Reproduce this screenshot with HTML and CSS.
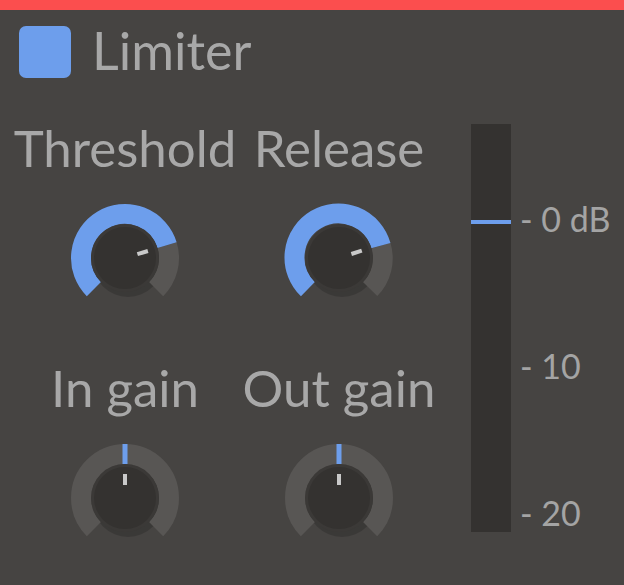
FILE: index.html
```html
<!DOCTYPE html>
<html lang="en">
<head>
  <meta charset="UTF-8">
  <meta name="viewport" content="width=device-width, initial-scale=1.0">
  <title>Limiter</title>
  <link rel="stylesheet" href="styles.css">
</head>
<body>
  <div class="top-bar"></div>

  <div class="header">
    <div class="toggle"></div>
    <h1 class="title">Limiter</h1>
  </div>

  <div class="panel">
    <div class="knobs">
      <div class="knob-cell">
        <div class="knob-label">Threshold</div>
        <svg class="knob" width="120" height="120" viewBox="0 0 120 120">
          <circle class="shadow" cx="63" cy="64" r="35"/>
          <path class="ring" d="M102.08 47.13 A44 44 0 0 1 91.11 91.11"/>
          <path class="ring-on" d="M28.89 91.11 A44 44 0 1 1 102.08 47.13"/>
          <circle class="body-rim" cx="60" cy="60" r="34"/>
          <circle class="body" cx="60" cy="60" r="31"/>
          <line class="pointer" x1="72.4" y1="56.2" x2="82.9" y2="53"/>
        </svg>
      </div>
      <div class="knob-cell">
        <div class="knob-label">Release</div>
        <svg class="knob" width="120" height="120" viewBox="0 0 120 120">
          <circle class="shadow" cx="63" cy="64" r="35"/>
          <path class="ring" d="M101.85 47.59 A44 44 0 0 1 91.11 91.11"/>
          <path class="ring-on" d="M28.89 91.11 A44 44 0 1 1 101.85 47.59"/>
          <circle class="body-rim" cx="60" cy="60" r="34"/>
          <circle class="body" cx="60" cy="60" r="31"/>
          <line class="pointer" x1="72.4" y1="56" x2="82.8" y2="52.6"/>
        </svg>
      </div>
      <div class="knob-cell">
        <div class="knob-label">In gain</div>
        <svg class="knob" width="120" height="120" viewBox="0 0 120 120">
          <circle class="shadow" cx="63" cy="64" r="35"/>
          <path class="ring" d="M28.89 91.11 A44 44 0 1 1 91.11 91.11"/>
          <rect class="ring-mark" x="57.5" y="6" width="5" height="20"/>
          <circle class="body-rim" cx="60" cy="60" r="34"/>
          <circle class="body" cx="60" cy="60" r="31"/>
          <line class="pointer" x1="60" y1="36" x2="60" y2="47"/>
        </svg>
      </div>
      <div class="knob-cell">
        <div class="knob-label">Out gain</div>
        <svg class="knob" width="120" height="120" viewBox="0 0 120 120">
          <circle class="shadow" cx="63" cy="64" r="35"/>
          <path class="ring" d="M28.89 91.11 A44 44 0 1 1 91.11 91.11"/>
          <rect class="ring-mark" x="57.5" y="6" width="5" height="20"/>
          <circle class="body-rim" cx="60" cy="60" r="34"/>
          <circle class="body" cx="60" cy="60" r="31"/>
          <line class="pointer" x1="60" y1="36" x2="60" y2="47"/>
        </svg>
      </div>
    </div>

    <div class="meter">
      <div class="meter-level"></div>
    </div>
    <div class="scale">
      <div class="scale-label">- 0 dB</div>
      <div class="scale-label">- 10</div>
      <div class="scale-label">- 20</div>
    </div>
  </div>
</body>
</html>
```

FILE: styles.css
```css
body {
  margin: 0;
  padding: 0;
  background-color: #464442;
  font-family: 'Lato', 'Open Sans', sans-serif;
  color: #a8a8a8;
  overflow: hidden;
}

.top-bar {
  height: 10px;
  background-color: #fb4e4e;
}

.header {
  display: flex;
  align-items: flex-start;
  gap: 21px;
  padding: 14px 0 0 19px;
}

.toggle {
  width: 52px;
  height: 52px;
  margin-top: 2px;
  border-radius: 7px;
  background-color: #6d9eec;
}

.title {
  margin: 0;
  font-size: 52px;
  font-weight: normal;
  line-height: 52px;
}

.panel {
  display: flex;
  align-items: flex-start;
  padding-top: 45px;
}

.knobs {
  display: grid;
  grid-template-columns: 214px 214px;
  row-gap: 45px;
  margin-left: 18px;
}

.knob-cell {
  display: flex;
  flex-direction: column;
  align-items: center;
  gap: 25px;
}

.knob-label {
  font-size: 51px;
  line-height: 50px;
  white-space: nowrap;
}

.knob {
  display: block;
}

.knob .shadow {
  fill: rgba(0, 0, 0, 0.16);
}

.knob .ring,
.knob .ring-on {
  fill: none;
  stroke-width: 20;
}

.knob .ring {
  stroke: #585654;
}

.knob .ring-on {
  stroke: #6d9eec;
}

.knob .ring-mark {
  fill: #6d9eec;
}

.knob .body-rim {
  fill: #3b3937;
}

.knob .body {
  fill: #343230;
}

.knob .pointer {
  stroke: #c9c9c9;
  stroke-width: 4;
}

.meter {
  display: flex;
  flex-direction: column;
  width: 40px;
  height: 408px;
  margin: 1px 0 0 25px;
  padding-top: 96px;
  box-sizing: border-box;
  background-color: #343230;
}

.meter-level {
  height: 4px;
  background-color: #6d9eec;
}

.scale {
  display: flex;
  flex-direction: column;
  gap: 111px;
  margin-left: 9px;
  padding-top: 78px;
}

.scale-label {
  font-size: 34px;
  line-height: 36px;
  white-space: nowrap;
  color: #a4a4a4;
}
```
